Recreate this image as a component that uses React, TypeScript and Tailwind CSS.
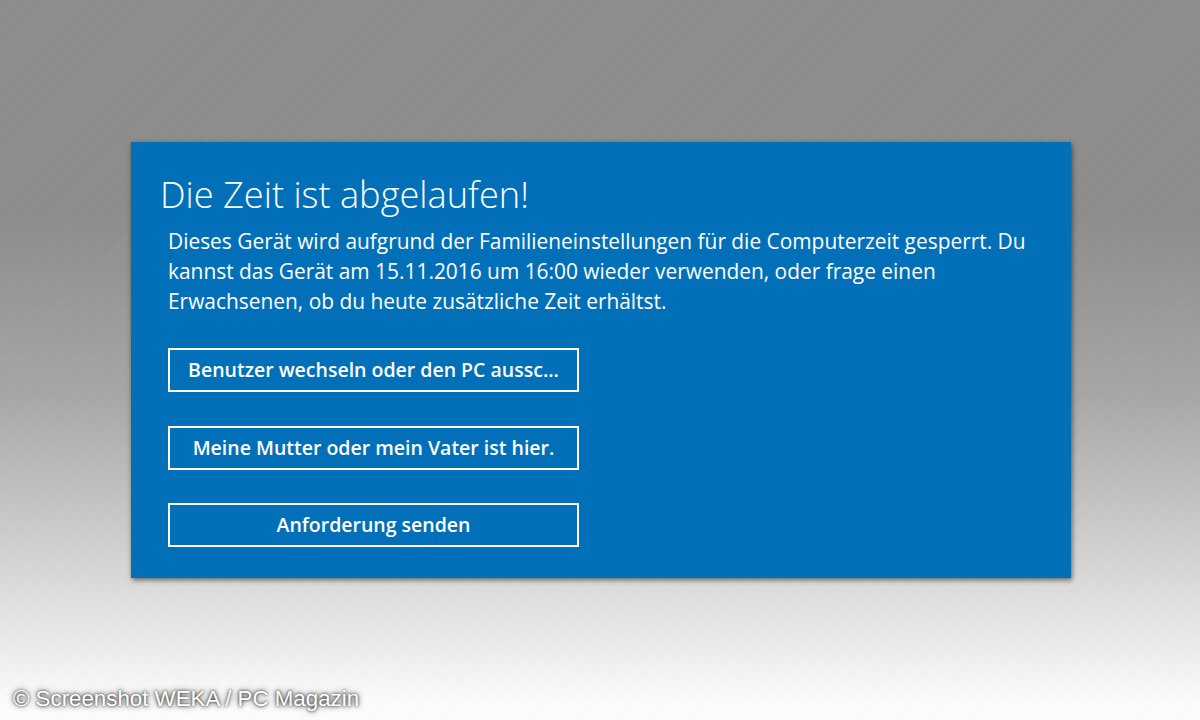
const ACTIONS = [
  'Benutzer wechseln oder den PC aussc...',
  'Meine Mutter oder mein Vater ist hier.',
  'Anforderung senden',
];

export default function App() {
  return (
    <div className="relative h-[720px] w-[1200px] overflow-hidden bg-[repeating-linear-gradient(135deg,rgba(255,255,255,0.025)_0px,rgba(255,255,255,0.025)_1px,rgba(0,0,0,0.02)_1px,rgba(0,0,0,0.02)_3px),linear-gradient(180deg,#8e8e8e_0%,#8e8e8e_30%,#a8a8a8_55%,#d6d6d6_78%,#ffffff_98%)] pl-[131px] pt-[142px] font-['Open_Sans','Noto_Sans',sans-serif]">
      <div className="flex h-[436px] w-[940px] flex-col bg-[#0170b9] pl-[37px] pt-[30px] text-white shadow-[1px_2px_5px_rgba(0,0,0,0.55)]">
        <h1 className="-ml-[8px] text-[36.2px] leading-[44px] font-light">Die Zeit ist abgelaufen!</h1>
        <p className="mt-[10px] w-[870px] text-[20.9px] leading-[30px] font-normal">
          Dieses Gerät wird aufgrund der Familieneinstellungen für die Computerzeit gesperrt. Du kannst das Gerät am 15.11.2016 um 16:00 wieder verwenden, oder frage einen Erwachsenen, ob du heute zusätzliche Zeit erhältst.
        </p>
        <div className="mt-[32px] flex flex-col gap-[33.5px]">
          {ACTIONS.map((label) => (
            <button
              key={label}
              className="flex h-[44px] w-[411px] items-center justify-center border-[2.5px] border-white text-[19.5px] font-semibold whitespace-nowrap"
            >
              {label}
            </button>
          ))}
        </div>
      </div>
      <div className="absolute bottom-[8px] left-[13px] font-['Liberation_Sans',sans-serif] text-[22.3px] leading-[26px] text-white [text-shadow:0_0_3px_#222,0_0_6px_#444]">
        © Screenshot WEKA / PC Magazin
      </div>
    </div>
  );
}
